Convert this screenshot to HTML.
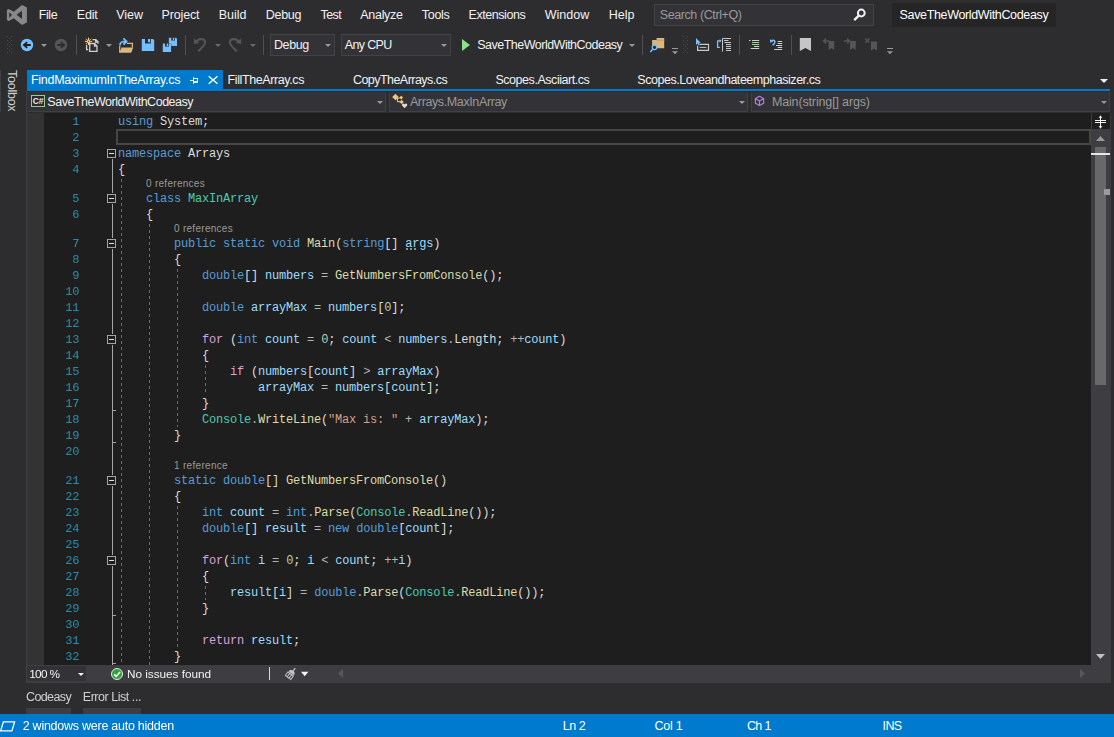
<!DOCTYPE html>
<html><head><meta charset="utf-8"><title>VS</title>
<style>
*{box-sizing:border-box;margin:0;padding:0}
html,body{width:1114px;height:737px;overflow:hidden;background:#2d2d30}
body{font-family:"Liberation Sans",sans-serif;font-size:12px;color:#f1f1f1;position:relative}
.abs{position:absolute}
.tx{position:absolute;height:16px;line-height:16px;white-space:pre}
.box{position:absolute}
.combo{position:absolute;background:#333337;border:1px solid #434346}
.arr{position:absolute;width:0;height:0;border-left:3px solid transparent;border-right:3px solid transparent;border-top:3px solid #999}
.sep{position:absolute;width:1px;top:35px;height:20px;background:#505054}
.grip{position:absolute;width:5px;height:18px;top:36px;background:repeating-linear-gradient(180deg,#4c4c51 0,#4c4c51 1px,transparent 1px,transparent 4px),repeating-linear-gradient(180deg,transparent 0,transparent 2px,#4c4c51 2px,#4c4c51 3px,transparent 3px,transparent 4px);background-size:1px 100%,1px 100%;background-position:0 0,2px 0;background-repeat:no-repeat}
svg{position:absolute;overflow:visible}
#editor{position:absolute;left:27px;top:113px;width:1064px;height:552px;background:#1e1e1e}
#indic{position:absolute;left:27px;top:113px;width:17px;height:552px;background:#333333}
.ln{position:absolute;left:27px;width:52.2px;height:16px;text-align:right;color:#2b91af;font-family:"Liberation Mono",monospace;font-size:12px;line-height:16px;letter-spacing:-0.2px;padding-top:1px;transform:scaleY(0.89);transform-origin:0 12px;will-change:transform}
.code{position:absolute;left:118px;height:16px;color:#dcdcdc;font-family:"Liberation Mono",monospace;font-size:12px;line-height:16px;letter-spacing:-0.2px;white-space:pre;padding-top:1px}
.k{color:#569cd6}.c{color:#d8a0df}.t{color:#4ec9b0}.m{color:#dcdcaa}.v{color:#9cdcfe}.o{color:#b4b4b4}.s{color:#d69d85}.n{color:#b5cea8}

.cl{position:absolute;height:13px;line-height:13px;font-size:10px;color:#999;white-space:pre}
.ob{position:absolute;left:107px;width:9px;height:9px;border:1px solid #a5a5a5;background:#1e1e1e;box-shadow:0 0 0 1px #1e1e1e}
.ob:after{content:"";position:absolute;left:1px;top:3px;width:5px;height:1px;background:#e0e0e0}
.tick{position:absolute;left:112px;width:4px;height:1px;background:#a5a5a5}
.guide{position:absolute;width:1px;background:repeating-linear-gradient(180deg,transparent 0,transparent 2px,#6a6a6a 2px,#6a6a6a 5px,transparent 5px,transparent 6px)}
#oline{position:absolute;left:112px;top:159px;width:1px;height:506px;background:#a5a5a5}
#curline{position:absolute;left:116px;top:129px;width:975px;height:16px;border:2px solid #464646}
</style></head><body>
<!-- VS logo -->
<svg style="left:0;top:0" width="32" height="30" viewBox="0 0 32 30"><path fill="#88888b" fill-rule="evenodd" d="M22,5 L26.9,7.4 V22.5 L22,25 L13.8,18.2 L8.75,21 L6.9,20 V10.1 L8.75,9.1 L13.8,11.8 Z M22,10.8 L16.5,14.7 L22,18.9 Z M9.2,12.2 L11.9,14.85 L9.2,17.9 Z"/></svg>
<!-- search -->
<div class="box" style="left:654px;top:4px;width:220px;height:22px;background:#333337;border:1px solid #434346"></div>
<svg style="left:852px;top:7px" width="16" height="16" viewBox="0 0 16 16"><circle cx="9.3" cy="6" r="3.4" fill="none" stroke="#f1f1f1" stroke-width="2"/><path d="M6.8,8.6 L2.2,13.2" stroke="#f1f1f1" stroke-width="2.4"/></svg>
<div class="box" style="left:892px;top:3px;width:164px;height:24px;background:#252526"></div>
<!-- toolbar -->
<svg style="left:0;top:0" width="1114" height="60" fill="#4b4b50"><rect x="7" y="36" width="1" height="1"/><rect x="11" y="36" width="1" height="1"/><rect x="9" y="38" width="1" height="1"/><rect x="7" y="40" width="1" height="1"/><rect x="11" y="40" width="1" height="1"/><rect x="9" y="42" width="1" height="1"/><rect x="7" y="44" width="1" height="1"/><rect x="11" y="44" width="1" height="1"/><rect x="9" y="46" width="1" height="1"/><rect x="7" y="48" width="1" height="1"/><rect x="11" y="48" width="1" height="1"/><rect x="9" y="50" width="1" height="1"/><rect x="7" y="52" width="1" height="1"/><rect x="11" y="52" width="1" height="1"/></svg>
<svg style="left:0;top:0" width="1114" height="60" fill="#4b4b50"><rect x="683" y="36" width="1" height="1"/><rect x="687" y="36" width="1" height="1"/><rect x="685" y="38" width="1" height="1"/><rect x="683" y="40" width="1" height="1"/><rect x="687" y="40" width="1" height="1"/><rect x="685" y="42" width="1" height="1"/><rect x="683" y="44" width="1" height="1"/><rect x="687" y="44" width="1" height="1"/><rect x="685" y="46" width="1" height="1"/><rect x="683" y="48" width="1" height="1"/><rect x="687" y="48" width="1" height="1"/><rect x="685" y="50" width="1" height="1"/><rect x="683" y="52" width="1" height="1"/><rect x="687" y="52" width="1" height="1"/></svg>
<!-- back / forward -->
<svg style="left:20px;top:38px" width="14" height="14" viewBox="0 0 14 14"><circle cx="7" cy="7" r="6.2" fill="#75beff"/><path d="M10.8,7 H4.2 M7.2,4.1 L3.9,7 L7.2,9.9" fill="none" stroke="#1e1e22" stroke-width="1.8"/></svg>
<div class="arr" style="left:41px;top:44px"></div>
<svg style="left:54px;top:38px" width="14" height="14" viewBox="0 0 14 14"><circle cx="7" cy="7" r="6.2" fill="#555558"/><path d="M3.2,7 H9.8 M6.8,4.1 L10.1,7 L6.8,9.9" fill="none" stroke="#2d2d30" stroke-width="1.8"/></svg>
<div class="sep" style="left:76px"></div>
<!-- new project / open / save / save all : absolute coords -->
<svg style="left:0;top:0" width="1114" height="60">
<g fill="none" stroke="#d0d0d0" stroke-width="1.3">
<path d="M92.5,39.6 H95.8 L98,41.8 V43.8 M95.6,39.6 V42 H98"/>
<path d="M86.6,44.8 V49.6 H88.3"/>
<path d="M89.7,43.5 H94.6 L97,45.9 V51.4 H89.7 Z" fill="#2d2d30"/>
<path d="M94.5,43.5 V46 H97"/>
</g>
<g stroke="#ffd68a" stroke-width="1" fill="none"><path d="M88.5,37.7 V45 M84.8,41.35 H92.2 M86,38.8 L91,43.9 M91,38.8 L86,43.9"/><circle cx="88.5" cy="41.35" r="1" fill="#2d2d30"/></g>
<!-- open -->
<path d="M126.8,43.3 H132.4 V47.5" fill="none" stroke="#dcb67a" stroke-width="1.3"/>
<path d="M119.1,46 V52.8 H131.2 L133.2,47.4 H121.6 L120.3,51 V46 Z" fill="#dcb67a"/>
<path d="M119.9,45.6 C119.9,42.2 121.5,41.4 126,41.4 M123.4,38.4 L126.6,41.4 L123.4,44.6" fill="none" stroke="#75beff" stroke-width="1.8"/>
<!-- save -->
<path d="M141.8,38.9 H145 V43.6 H150.8 V38.9 H153 L154.2,40.2 V51.1 H141.8 Z M148,38.9 H150 V42.3 H148 Z" fill="#75beff"/>
<!-- save all -->
<path d="M168.85,37.65 H171.3 V40.6 H175 V37.65 H176 L177,38.7 V46 H168.85 Z M172.9,37.65 H174.2 V40 H172.9 Z" fill="#75beff"/>
<path d="M162.8,43.6 H165.1 V46.5 H168.85 V43.6 H170 L171.1,44.7 V52 H162.8 Z M166.8,43.6 H168.1 V46 H166.8 Z" fill="#75beff" stroke="#2d2d30" stroke-width="0.8" paint-order="stroke"/>
</svg>
<div class="arr" style="left:106px;top:44px"></div>
<div class="sep" style="left:185px"></div>
<!-- undo/redo disabled -->
<svg style="left:0;top:0" width="1114" height="60">
<g id="undo"><path d="M193.8,38.2 V43.9 L199.6,43 Z" fill="#555558"/><path d="M196.5,41.2 C199,38.3 204.3,38.3 205.2,42 C205.6,44.5 203,46.5 198.2,51.3" fill="none" stroke="#555558" stroke-width="2.1"/></g>
<g transform="translate(435,0) scale(-1,1)"><path d="M193.8,38.2 V43.9 L199.6,43 Z" fill="#555558"/><path d="M196.5,41.2 C199,38.3 204.3,38.3 205.2,42 C205.6,44.5 203,46.5 198.2,51.3" fill="none" stroke="#555558" stroke-width="2.1"/></g>
</svg>
<div class="arr" style="left:215px;top:44px;border-top-color:#6a6a6e"></div>
<div class="arr" style="left:250px;top:44px;border-top-color:#6a6a6e"></div>
<div class="sep" style="left:263px"></div>
<div class="combo" style="left:270px;top:34px;width:65px;height:22px"></div>
<div class="arr" style="left:325px;top:44px"></div>
<div class="combo" style="left:341px;top:34px;width:110px;height:22px"></div>
<div class="arr" style="left:441px;top:44px"></div>
<!-- play -->
<svg style="left:461px;top:38px" width="10" height="14" viewBox="0 0 10 14"><path d="M1,1 L9,7 L1,13 Z" fill="#8ae28a"/></svg>
<div class="arr" style="left:629px;top:44px"></div>
<div class="sep" style="left:642px"></div>
<div class="sep" style="left:739px"></div><div class="sep" style="left:791px"></div>
<!-- find in files etc -->
<svg style="left:0;top:0" width="1114" height="60">
<path d="M652.1,40 H656.6 V38.1 H664.2 V48.2 H652.1 Z" fill="#dcb67a"/><path d="M656.6,40.3 H664.2" stroke="#c09a5a" stroke-width="0.8"/>
<circle cx="654.5" cy="47.3" r="2.3" fill="#2d2d30" stroke="#75beff" stroke-width="1.3"/><path d="M653,49 L650.3,52" stroke="#75beff" stroke-width="1.5"/>
<rect x="672" y="48" width="6" height="1" fill="#999"/><path d="M672,51.2 H678 L675,54.2 Z" fill="#999"/>
<!-- cursor box -->
<path d="M696,38 V44.9 L697.6,43.5 L698.6,45.6 L699.8,45 L698.8,43.1 H701 Z" fill="#75beff"/>
<path d="M699.5,44.3 H708.5 V50.3 H697.6 V45.8" fill="none" stroke="#c8c8c8" stroke-width="1.2"/><path d="M699.7,47.4 H706.4" stroke="#c8c8c8" stroke-width="1"/>
<!-- bracket lines -->
<path d="M720.3,40.8 H717.6 V47.3 H719.9" fill="none" stroke="#75beff" stroke-width="1.3"/><path d="M719.6,38.9 L721.6,40.8 L719.6,42.7 Z" fill="#75beff"/>
<path d="M722.5,51.5 V38.5 H731 M724,40.5 H728.5 M724.5,42.5 H731 M726,44.5 H731 M726,46.5 H731 M726,48.5 H731 M726,50.5 H731" fill="none" stroke="#c8c8c8" stroke-width="1"/>
<!-- comment -->
<path d="M749,40.5 H750.5 M752,40.5 H759.2 M754,46.5 H759.2 M750.8,48.5 H759.2" stroke="#d0d0d0" stroke-width="1"/>
<path d="M752,42.5 H759.2 M752,44.5 H759.2" stroke="#8ae28a" stroke-width="1"/>
<!-- uncomment -->
<path d="M777.7,41.5 H782.2 M777.7,43.5 H782.2 M776,45.5 H782.2 M777.7,47.5 H782.2 M774.2,49.5 H782.2" stroke="#d0d0d0" stroke-width="1"/>
<path d="M771.5,40.6 C774,39.4 775.6,41.2 774.6,43 C774.2,43.9 773.4,44.5 772.6,45.2" fill="none" stroke="#75beff" stroke-width="1.5"/><path d="M769.9,39.2 L770.1,42.8 L773.4,41.6 Z" fill="#75beff"/>
<!-- bookmark -->
<path d="M799.8,38.1 H811 V51 L805.4,48 L799.8,51 Z" fill="#c5c5c5"/>
<!-- prev/next/clear disabled -->
<g fill="#555558" stroke="none">
<path d="M828.6,41 H834.2 V50 L831.4,47.9 L828.6,50 Z"/>
<path d="M850,41 H855.8 V50 L852.9,47.9 L850,50 Z"/>
<path d="M871,41.5 H877 V50.8 L874,48.6 L871,50.8 Z"/>
</g>
<g fill="none" stroke="#555558" stroke-width="1.4">
<path d="M823.5,41 H829 M826,38.5 L823.5,41 L826,43.5"/>
<path d="M844,41 H849.5 M847,38.5 L849.5,41 L847,43.5"/>
<path d="M865.3,38.6 L869.4,42.8 M869.4,38.6 L865.3,42.8"/>
</g>
<rect x="887" y="48" width="6" height="1" fill="#999"/><path d="M887,51.2 H893 L890,54.2 Z" fill="#999"/>
</svg>
<!-- left strip + toolbox -->
<div class="box" style="left:0;top:70px;width:1px;height:42px;background:#3f3f46"></div>
<div class="tx" id="toolbox" style="left:-9px;top:83px;width:42px;transform:rotate(90deg);transform-origin:center;font-size:12.5px;color:#d0d0d0;letter-spacing:-0.25px">Toolbox</div>
<!-- tabs -->
<div class="box" style="left:27px;top:70px;width:196px;height:20px;background:#007acc"></div>
<div class="box" style="left:27px;top:89px;width:1083px;height:2px;background:#007acc"></div>
<!-- pin + x -->
<svg style="left:0;top:0" width="230" height="92" fill="#eaf4fb"><rect x="190" y="80" width="3" height="1"/><rect x="193" y="77" width="1" height="7"/><rect x="194" y="78" width="4" height="1"/><rect x="197" y="78" width="1" height="5"/><rect x="194" y="81" width="4" height="2"/>
<path d="M208.7,76.3 L217.5,83.8 M217.5,76.3 L208.7,83.8" stroke="#ffffff" stroke-width="1.35" fill="none"/></svg>
<div class="arr" style="left:1100px;top:79px;border-left-width:4px;border-right-width:4px;border-top:4px solid #f1f1f1"></div>
<!-- nav bar -->
<div class="box" style="left:26px;top:91px;width:1px;height:592px;background:#3f3f46"></div>
<div class="combo" style="left:27px;top:92px;width:359px;height:20px;border-color:#333337 #3f3f46 #3f3f46 #333337"></div>
<div class="combo" style="left:389px;top:92px;width:359px;height:20px;border-color:#333337 #3f3f46 #3f3f46 #3f3f46"></div>
<div class="combo" style="left:751px;top:92px;width:359px;height:20px;border-color:#333337 #3f3f46 #3f3f46 #3f3f46"></div>
<div class="arr" style="left:377px;top:101px"></div>
<div class="arr" style="left:739px;top:101px"></div>
<div class="arr" style="left:1101px;top:101px"></div>
<!-- C# icon -->
<div class="box" style="left:31px;top:95px;width:14px;height:12px;border:1px solid #8fce8f;background:#2d2d30;font-size:8.5px;line-height:10px;font-weight:bold;color:#e8e8e8;text-align:center;letter-spacing:-0.3px">C#</div>
<!-- class icon + cube -->
<svg style="left:0;top:0" width="1114" height="112">
<g fill="#f3c679"><path d="M395.4,93.8 L398.6,97 L395.4,100.2 L392.2,97 Z"/><path d="M401.2,95.7 L403.1,97.6 L401.2,99.5 L399.3,97.6 Z"/><path d="M401.6,99.7 L403.8,101.9 L401.6,104.1 L399.4,101.9 Z"/></g>
<path d="M397.4,98.2 V101.7 H400 M397.4,98.2 H399.6" fill="none" stroke="#f8d38c" stroke-width="1"/>
<path d="M404.6,108.2 L402,105.4 C401.4,103.5 403.6,102.7 404.6,104.3 C405.6,102.7 407.8,103.5 407.2,105.4 Z" fill="#d8d8d8"/>
<path d="M759.5,96.3 L763.6,98.6 V103.3 L759.5,105.6 L755.4,103.3 V98.6 Z M755.4,98.6 L759.5,100.9 L763.6,98.6 M759.5,100.9 V105.6" fill="none" stroke="#b180d7" stroke-width="1.15" stroke-linejoin="round"/>
</svg>
<!-- editor -->
<div id="editor"></div>
<div id="indic"></div>
<div id="curline"></div>
<div id="oline"></div>
<div class="guide" style="left:121px;top:177px;height:488px"></div><div class="guide" style="left:149px;top:222px;height:443px"></div><div class="guide" style="left:177px;top:267px;height:160px"></div><div class="guide" style="left:177px;top:504px;height:144px"></div><div class="guide" style="left:205px;top:363px;height:32px"></div><div class="guide" style="left:205px;top:584px;height:16px"></div>
<div class="ob" style="top:149px"></div><div class="ob" style="top:194px"></div><div class="ob" style="top:239px"></div><div class="ob" style="top:335px"></div><div class="ob" style="top:476px"></div><div class="ob" style="top:556px"></div>
<div class="tick" style="top:410px"></div><div class="tick" style="top:442px"></div><div class="tick" style="top:615px"></div><div class="tick" style="top:663px"></div>
<div class="ln" style="top:113px">1</div>
<div class="code" style="top:113px"><span class="k">using</span> System;</div>
<div class="ln" style="top:129px">2</div>
<div class="ln" style="top:145px">3</div>
<div class="code" style="top:145px"><span class="k">namespace</span> Arrays</div>
<div class="ln" style="top:161px">4</div>
<div class="code" style="top:161px">{</div>
<div class="cl" style="top:177px;left:146px;letter-spacing:0.284px">0 references</div>
<div class="ln" style="top:190px">5</div>
<div class="code" style="top:190px">    <span class="k">class</span> <span class="t">MaxInArray</span></div>
<div class="ln" style="top:206px">6</div>
<div class="code" style="top:206px">    {</div>
<div class="cl" style="top:222px;left:174px;letter-spacing:0.284px">0 references</div>
<div class="ln" style="top:235px">7</div>
<div class="code" style="top:235px">        <span class="k">public</span> <span class="k">static</span> <span class="k">void</span> <span class="m">Main</span>(<span class="k">string</span>[] <span class="v u">args</span>)</div>
<div class="ln" style="top:251px">8</div>
<div class="code" style="top:251px">        {</div>
<div class="ln" style="top:267px">9</div>
<div class="code" style="top:267px">            <span class="k">double</span>[] <span class="v">numbers</span> <span class="o">=</span> <span class="m">GetNumbersFromConsole</span>();</div>
<div class="ln" style="top:283px">10</div>
<div class="ln" style="top:299px">11</div>
<div class="code" style="top:299px">            <span class="k">double</span> <span class="v">arrayMax</span> <span class="o">=</span> <span class="v">numbers</span>[<span class="n">0</span>];</div>
<div class="ln" style="top:315px">12</div>
<div class="ln" style="top:331px">13</div>
<div class="code" style="top:331px">            <span class="c">for</span> (<span class="k">int</span> <span class="v">count</span> <span class="o">=</span> <span class="n">0</span>; <span class="v">count</span> <span class="o">&lt;</span> <span class="v">numbers</span><span class="o">.</span>Length; <span class="o">++</span><span class="v">count</span>)</div>
<div class="ln" style="top:347px">14</div>
<div class="code" style="top:347px">            {</div>
<div class="ln" style="top:363px">15</div>
<div class="code" style="top:363px">                <span class="c">if</span> (<span class="v">numbers</span>[<span class="v">count</span>] <span class="o">&gt;</span> <span class="v">arrayMax</span>)</div>
<div class="ln" style="top:379px">16</div>
<div class="code" style="top:379px">                    <span class="v">arrayMax</span> <span class="o">=</span> <span class="v">numbers</span>[<span class="v">count</span>];</div>
<div class="ln" style="top:395px">17</div>
<div class="code" style="top:395px">            }</div>
<div class="ln" style="top:411px">18</div>
<div class="code" style="top:411px">            <span class="t">Console</span><span class="o">.</span><span class="m">WriteLine</span>(<span class="s">&quot;Max is: &quot;</span> <span class="o">+</span> <span class="v">arrayMax</span>);</div>
<div class="ln" style="top:427px">19</div>
<div class="code" style="top:427px">        }</div>
<div class="ln" style="top:443px">20</div>
<div class="cl" style="top:459px;left:174px;letter-spacing:0.310px">1 reference</div>
<div class="ln" style="top:472px">21</div>
<div class="code" style="top:472px">        <span class="k">static</span> <span class="k">double</span>[] <span class="m">GetNumbersFromConsole</span>()</div>
<div class="ln" style="top:488px">22</div>
<div class="code" style="top:488px">        {</div>
<div class="ln" style="top:504px">23</div>
<div class="code" style="top:504px">            <span class="k">int</span> <span class="v">count</span> <span class="o">=</span> <span class="k">int</span><span class="o">.</span><span class="m">Parse</span>(<span class="t">Console</span><span class="o">.</span><span class="m">ReadLine</span>());</div>
<div class="ln" style="top:520px">24</div>
<div class="code" style="top:520px">            <span class="k">double</span>[] <span class="v">result</span> <span class="o">=</span> <span class="k">new</span> <span class="k">double</span>[<span class="v">count</span>];</div>
<div class="ln" style="top:536px">25</div>
<div class="ln" style="top:552px">26</div>
<div class="code" style="top:552px">            <span class="c">for</span>(<span class="k">int</span> <span class="v">i</span> <span class="o">=</span> <span class="n">0</span>; <span class="v">i</span> <span class="o">&lt;</span> <span class="v">count</span>; <span class="o">++</span><span class="v">i</span>)</div>
<div class="ln" style="top:568px">27</div>
<div class="code" style="top:568px">            {</div>
<div class="ln" style="top:584px">28</div>
<div class="code" style="top:584px">                <span class="v">result</span>[<span class="v">i</span>] <span class="o">=</span> <span class="k">double</span><span class="o">.</span><span class="m">Parse</span>(<span class="t">Console</span><span class="o">.</span><span class="m">ReadLine</span>());</div>
<div class="ln" style="top:600px">29</div>
<div class="code" style="top:600px">            }</div>
<div class="ln" style="top:616px">30</div>
<div class="ln" style="top:632px">31</div>
<div class="code" style="top:632px">            <span class="c">return</span> <span class="v">result</span>;</div>
<div class="ln" style="top:648px">32</div>
<div class="code" style="top:648px">        }</div>
<svg style="left:406px;top:248px" width="10" height="2" fill="#909090"><rect x="0" y="0" width="2" height="2"/><rect x="4" y="0" width="2" height="2"/><rect x="8" y="0" width="2" height="2"/></svg>
<!-- vertical scrollbar -->
<div class="box" style="left:1091px;top:113px;width:20px;height:570px;background:#3e3e42"></div>
<div class="box" style="left:1092px;top:113px;width:18px;height:16px;background:#1e1e1e"></div>
<svg style="left:1090px;top:110px" width="24" height="24" fill="#f4f4f4"><rect x="5" y="10" width="11" height="1"/><rect x="5" y="12" width="11" height="1"/><rect x="10" y="6" width="1" height="12"/><path d="M8.5,8.3 L10.5,5.3 L12.5,8.3 L10.5,7.6 Z M8.5,15.7 L10.5,18.7 L12.5,15.7 L10.5,16.4 Z"/></svg>
<svg style="left:1090px;top:130px" width="24" height="16"><path d="M6,11 H15 L10.5,6 Z" fill="#999"/></svg>
<div class="box" style="left:1095px;top:147px;width:11px;height:238px;background:#686868"></div>
<div class="box" style="left:1091px;top:153px;width:19px;height:2px;background:#e6e6e6"></div>
<div class="box" style="left:1104px;top:189px;width:6px;height:6px;background:#9a9a9a"></div>
<svg style="left:1090px;top:650px" width="24" height="12"><path d="M6,4 H15 L10.5,9 Z" fill="#c0c0c0"/></svg>
<!-- bottom strip -->
<div class="box" style="left:27px;top:665px;width:1084px;height:18px;background:#3e3e42"></div>
<div class="box" style="left:27px;top:666px;width:59px;height:15px;background:#333337"></div>
<div class="arr" style="left:78px;top:673px;border-top-color:#f1f1f1"></div>
<svg style="left:111px;top:668px" width="12" height="12" viewBox="0 0 12 12"><circle cx="6" cy="6" r="5.5" fill="#2ea336" stroke="#e6e6e6" stroke-width="1"/><path d="M3.2,6.4 L5.2,8.4 L9,3.9" fill="none" stroke="#ffffff" stroke-width="1.6"/></svg>
<div class="box" style="left:269px;top:667px;width:1px;height:13px;background:#dadada"></div>
<svg style="left:0;top:660px" width="400" height="24"><g transform="translate(290.4,14.4) rotate(38)"><path d="M0,-8 V-4.5" stroke="#d0d0d0" stroke-width="1"/><path d="M-3.3,-1.3 C-3.3,-5.8 3.3,-5.8 3.3,-1.3 Z" fill="#c4c4c4"/><path d="M-3.4,-0.4 H3.4 V3.8 H-3.4 Z M-1.1,-0.4 V3.8 M1.2,-0.4 V3.8" fill="none" stroke="#c4c4c4" stroke-width="1"/></g>
<path d="M301,11.8 H308.4 L304.7,16.2 Z" fill="#f4f4f4"/></svg>
<svg style="left:0;top:660px" width="1114" height="24" fill="#58585c"><path d="M343,9 V18 L338,13.5 Z M1080,9 V18 L1085,13.5 Z"/></svg>

<!-- bottom tabs -->
<div class="box" style="left:26px;top:708px;width:45px;height:6px;background:#3e3e42"></div>
<div class="box" style="left:83px;top:708px;width:58px;height:6px;background:#3e3e42"></div>
<!-- status bar -->
<div class="box" style="left:0;top:714px;width:1114px;height:23px;background:#007acc"></div>
<svg style="left:0px;top:720px" width="16" height="12" viewBox="0 0 16 12"><path d="M3.4,1.9 H14.6 L11.9,10.9 H0.6 Z" fill="none" stroke="#ffffff" stroke-width="1.3"/></svg>
<div class="tx" style="left:38.7px;top:6.9px;color:#f1f1f1;font-size:12.5px;letter-spacing:-0.364px">File</div>
<div class="tx" style="left:76.8px;top:6.9px;color:#f1f1f1;font-size:12.5px;letter-spacing:-0.212px">Edit</div>
<div class="tx" style="left:116.2px;top:6.9px;color:#f1f1f1;font-size:12.5px;letter-spacing:-0.044px">View</div>
<div class="tx" style="left:161.6px;top:6.9px;color:#f1f1f1;font-size:12.5px;letter-spacing:-0.172px">Project</div>
<div class="tx" style="left:218.7px;top:6.9px;color:#f1f1f1;font-size:12.5px;letter-spacing:-0.019px">Build</div>
<div class="tx" style="left:265.8px;top:6.9px;color:#f1f1f1;font-size:12.5px;letter-spacing:-0.289px">Debug</div>
<div class="tx" style="left:320.5px;top:6.9px;color:#f1f1f1;font-size:12.5px;letter-spacing:-0.559px">Test</div>
<div class="tx" style="left:360.3px;top:6.9px;color:#f1f1f1;font-size:12.5px;letter-spacing:-0.298px">Analyze</div>
<div class="tx" style="left:421.8px;top:6.9px;color:#f1f1f1;font-size:12.5px;letter-spacing:-0.298px">Tools</div>
<div class="tx" style="left:468.5px;top:6.9px;color:#f1f1f1;font-size:12.5px;letter-spacing:-0.436px">Extensions</div>
<div class="tx" style="left:544.7px;top:6.9px;color:#f1f1f1;font-size:12.5px;letter-spacing:0.039px">Window</div>
<div class="tx" style="left:608.8px;top:6.9px;color:#f1f1f1;font-size:12.5px;letter-spacing:-0.005px">Help</div>
<div class="tx" style="left:659.7px;top:6.9px;color:#999999;font-size:12.5px;letter-spacing:-0.398px">Search (Ctrl+Q)</div>
<div class="tx" style="left:899.6px;top:6.9px;color:#ffffff;font-size:12.5px;letter-spacing:-0.351px">SaveTheWorldWithCodeasy</div>
<div class="tx" style="left:274.0px;top:36.9px;color:#f1f1f1;font-size:12.5px;letter-spacing:-0.409px">Debug</div>
<div class="tx" style="left:344.8px;top:36.9px;color:#f1f1f1;font-size:12.5px;letter-spacing:-0.658px">Any CPU</div>
<div class="tx" style="left:477.3px;top:36.9px;color:#f1f1f1;font-size:12.5px;letter-spacing:-0.512px">SaveTheWorldWithCodeasy</div>
<div class="tx" style="left:30.9px;top:71.9px;color:#ffffff;font-size:12.5px;letter-spacing:-0.252px">FindMaximumInTheArray.cs</div>
<div class="tx" style="left:227.6px;top:71.9px;color:#f1f1f1;font-size:12.5px;letter-spacing:-0.395px">FillTheArray.cs</div>
<div class="tx" style="left:352.9px;top:71.9px;color:#f1f1f1;font-size:12.5px;letter-spacing:-0.538px">CopyTheArrays.cs</div>
<div class="tx" style="left:495.4px;top:71.9px;color:#f1f1f1;font-size:12.5px;letter-spacing:-0.451px">Scopes.Asciiart.cs</div>
<div class="tx" style="left:637.3px;top:71.9px;color:#f1f1f1;font-size:12.5px;letter-spacing:-0.466px">Scopes.Loveandhateemphasizer.cs</div>
<div class="tx" style="left:47.3px;top:94.4px;color:#f1f1f1;font-size:12.5px;letter-spacing:-0.477px">SaveTheWorldWithCodeasy</div>
<div class="tx" style="left:409.9px;top:94.4px;color:#999999;font-size:12.5px;letter-spacing:-0.382px">Arrays.MaxInArray</div>
<div class="tx" style="left:771.9px;top:94.4px;color:#999999;font-size:12.5px;letter-spacing:-0.144px">Main(string[] args)</div>
<div class="tx" style="left:29.2px;top:666.1px;color:#f1f1f1;font-size:11.8px;letter-spacing:-0.651px">100 %</div>
<div class="tx" style="left:127.0px;top:666.1px;color:#f1f1f1;font-size:11.8px;letter-spacing:-0.041px">No issues found</div>
<div class="tx" style="left:26.0px;top:688.9px;color:#d0d0d0;font-size:12.5px;letter-spacing:-0.606px">Codeasy</div>
<div class="tx" style="left:82.8px;top:688.9px;color:#d0d0d0;font-size:12.5px;letter-spacing:-0.464px">Error List ...</div>
<div class="tx" style="left:22.7px;top:717.9px;color:#ffffff;font-size:12.5px;letter-spacing:-0.252px">2 windows were auto hidden</div>
<div class="tx" style="left:562.8px;top:717.9px;color:#ffffff;font-size:12.5px;letter-spacing:-0.461px">Ln 2</div>
<div class="tx" style="left:654.5px;top:717.9px;color:#ffffff;font-size:12.5px;letter-spacing:-0.218px">Col 1</div>
<div class="tx" style="left:747.0px;top:717.9px;color:#ffffff;font-size:12.5px;letter-spacing:-0.677px">Ch 1</div>
<div class="tx" style="left:882.6px;top:717.9px;color:#ffffff;font-size:12.5px;letter-spacing:-0.615px">INS</div>

</body></html>
